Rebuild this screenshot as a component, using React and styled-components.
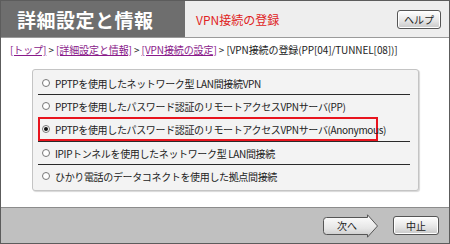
import React from "react";
import styled, { createGlobalStyle } from "styled-components";

const GlobalStyle = createGlobalStyle`
  html, body { margin: 0; padding: 0; background: #fff; }
  body { font-family: "Noto Sans CJK JP", "Noto Sans", sans-serif; }
`;

const Frame = styled.div`
  width: 450px;
  height: 244px;
  box-sizing: border-box;
  border: 1px solid #5c5c5c;
  display: flex;
  flex-direction: column;
  background: #fff;
  overflow: hidden;
`;

const Header = styled.div`
  height: 36px;
  display: flex;
  border-bottom: 1px solid #9a9a9a;
  flex-shrink: 0;
`;

const TitleBlock = styled.div`
  width: 184px;
  background: #6e6e6e;
  color: #fff;
  font-weight: bold;
  font-size: 19px;
  display: flex;
  align-items: center;
  padding-left: 16px;
  box-sizing: border-box;
  letter-spacing: 0.5px;
`;

const SubHeader = styled.div`
  flex: 1;
  background: #eeeeee;
  display: flex;
  align-items: center;
  justify-content: space-between;
  padding: 0 8px 0 11px;
`;

const PageTitle = styled.span`
  color: #e02424;
  font-size: 12px;
`;

const SmallButton = styled.button`
  font-family: inherit;
  font-size: 10px;
  color: #222;
  height: 19px;
  padding: 0;
  white-space: nowrap;
  border: 1px solid #555;
  border-radius: 3px;
  background: linear-gradient(#ffffff, #e4e4e4 60%, #c8c8c8);
  box-shadow: inset 0 0 0 1px #fff;
  display: flex;
  align-items: center;
  justify-content: center;
  width: ${(p) => p.$w || 44}px;
`;

const Body = styled.div`
  flex: 1;
  display: flex;
  flex-direction: column;
  padding: 5px 0 0 9px;
`;

const Breadcrumb = styled.div`
  font-size: 10px;
  color: #222;
  white-space: nowrap;
  line-height: 14px;
  letter-spacing: -0.1px;
`;

const Crumb = styled.a`
  color: #8a1a8a;
  text-decoration: underline;
`;

const OptionsBox = styled.div`
  margin: 12px 0 0 22px;
  width: 387px;
  box-sizing: border-box;
  border: 1px solid #c4c4c4;
  border-radius: 3px;
  background: #f3f3f3;
  box-shadow: 1px 1px 1px #d8d8d8;
  padding: 2px 8px 3px 5px;
  display: flex;
  flex-direction: column;
`;

const OptionRow = styled.label`
  display: flex;
  align-items: center;
  gap: 5px;
  height: ${(p) => (p.$selected ? 20 : 22)}px;
  font-size: 10px;
  letter-spacing: -0.35px;
  white-space: nowrap;
  color: #222;
  border-top: ${(p) => (p.$first ? "none" : "1px solid #2a2a2a")};
  padding-left: 4px;
  ${(p) =>
    p.$selected &&
    `
    border: 2px solid #e8141e;
    margin-right: 32px;
    padding-left: 2px;
  `}
`;

const RadioIcon = styled.span`
  width: 8px;
  height: 8px;
  border-radius: 50%;
  border: 1px solid #777;
  background: #fff;
  box-sizing: border-box;
  display: flex;
  align-items: center;
  justify-content: center;
  flex-shrink: 0;
  &::after {
    content: "";
    width: 4px;
    height: 4px;
    border-radius: 50%;
    background: ${(p) => (p.$on ? "#111" : "transparent")};
  }
`;

const Footer = styled.div`
  height: 35px;
  flex-shrink: 0;
  background: #c0c0c0;
  border-top: 1px solid #8c8c8c;
  display: flex;
  align-items: center;
  justify-content: flex-end;
  gap: 14px;
  padding-right: 10px;
`;

const ArrowButton = styled.div`
  position: relative;
  width: 56px;
  height: 24px;
  font-size: 10px;
  color: #222;
`;

const ArrowLabel = styled.span`
  position: absolute;
  left: 0;
  top: 0;
  width: 48px;
  height: 24px;
  display: flex;
  align-items: center;
  justify-content: center;
`;

const options = [
  "PPTPを使用したネットワーク型 LAN間接続VPN",
  "PPTPを使用したパスワード認証のリモートアクセスVPNサーバ(PP)",
  "PPTPを使用したパスワード認証のリモートアクセスVPNサーバ(Anonymous)",
  "IPIPトンネルを使用したネットワーク型 LAN間接続",
  "ひかり電話のデータコネクトを使用した拠点間接続",
];

export default function App() {
  const selected = 2;
  return (
    <>
      <GlobalStyle />
      <Frame>
        <Header>
          <TitleBlock>詳細設定と情報</TitleBlock>
          <SubHeader>
            <PageTitle>VPN接続の登録</PageTitle>
            <SmallButton $w={44}>ヘルプ</SmallButton>
          </SubHeader>
        </Header>
        <Body>
          <Breadcrumb>
            <Crumb>[トップ]</Crumb> &gt; <Crumb>[詳細設定と情報]</Crumb> &gt;{" "}
            <Crumb>[VPN接続の設定]</Crumb> &gt; [VPN接続の登録(PP[04]/TUNNEL[08])]
          </Breadcrumb>
          <OptionsBox>
            {options.map((o, i) => (
              <OptionRow key={i} $first={i === 0} $selected={i === selected}>
                <RadioIcon $on={i === selected} />
                {o}
              </OptionRow>
            ))}
          </OptionsBox>
        </Body>
        <Footer>
          <ArrowButton>
            <svg width="56" height="24" viewBox="0 0 56 24">
              <defs>
                <linearGradient id="ag" x1="0" y1="0" x2="0" y2="1">
                  <stop offset="0" stopColor="#ffffff" />
                  <stop offset="0.6" stopColor="#e6e6e6" />
                  <stop offset="1" stopColor="#c6c6c6" />
                </linearGradient>
              </defs>
              <path
                d="M3.5 3.5 H44.5 L44.5 0.8 L54.5 12 L44.5 23.2 L44.5 20.5 H3.5 Q0.5 20.5 0.5 17.5 V6.5 Q0.5 3.5 3.5 3.5 Z"
                fill="url(#ag)"
                stroke="#555"
                strokeWidth="1"
              />
            </svg>
            <ArrowLabel>次へ</ArrowLabel>
          </ArrowButton>
          <SmallButton $w={46}>中止</SmallButton>
        </Footer>
      </Frame>
    </>
  );
}
